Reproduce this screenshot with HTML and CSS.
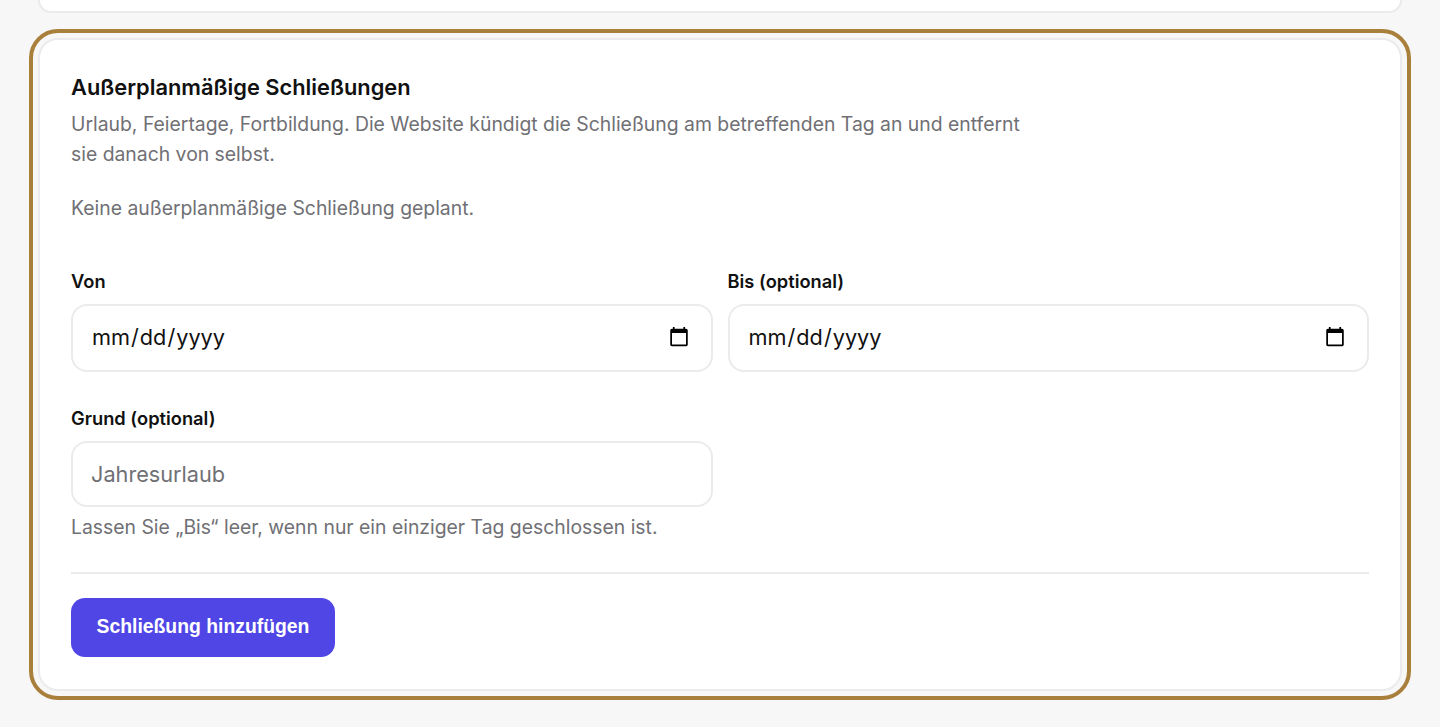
FILE: index.html
```html
<!DOCTYPE html>
<html lang="de">
<head>
    <meta charset="UTF-8">
    <meta name="viewport" content="width=device-width, initial-scale=1.0">
    <title>Außerplanmäßige Schließungen</title>
    <link rel="stylesheet" href="styles.css">
</head>
<body>

<div class="page">
    <div class="card card-prev"></div>

    <form class="card card-active">
        <h2 class="card-title">Außerplanmäßige Schließungen</h2>
        <p class="card-desc">Urlaub, Feiertage, Fortbildung. Die Website kündigt die Schließung am betreffenden Tag an und entfernt sie danach von selbst.</p>
        <p class="empty-note">Keine außerplanmäßige Schließung geplant.</p>

        <div class="form-grid">
            <div class="field">
                <label class="field-label" for="von">Von</label>
                <input class="field-input field-date" id="von" type="date">
            </div>
            <div class="field">
                <label class="field-label" for="bis">Bis (optional)</label>
                <input class="field-input field-date" id="bis" type="date">
            </div>
            <div class="field">
                <label class="field-label" for="grund">Grund (optional)</label>
                <input class="field-input" id="grund" type="text" placeholder="Jahresurlaub">
            </div>
        </div>

        <p class="hint">Lassen Sie „Bis“ leer, wenn nur ein einziger Tag geschlossen ist.</p>

        <div class="form-footer">
            <button class="submit-button" type="button">Schließung hinzufügen</button>
        </div>
    </form>
</div>

</body>
</html>
```

FILE: styles.css
```css
* {
    box-sizing: border-box;
}
html, body {
    margin: 0;
    padding: 0;
}
body {
    background-color: #f7f7f8;
    font-family: Inter, "Liberation Sans", sans-serif;
    color: #111;
}
.page {
    height: 727px;
    padding: 0 38px;
    display: flex;
    flex-direction: column;
    gap: 24.5px;
}
.card {
    background-color: #fff;
    border: 2px solid #ebebee;
    border-radius: 20px;
}
.card-prev {
    flex: none;
    height: 13px;
    border-top: none;
    border-top-left-radius: 0;
    border-top-right-radius: 0;
}
.card-active {
    flex: none;
    padding: 31px 31px 32px;
    height: 653px;
    outline: 4px solid #a97f3c;
    outline-offset: 5px;
}
.card-title {
    margin: 0 0 6.4px;
    font-size: 21.84px;
    font-weight: 600;
    line-height: 32px;
}
.card-desc {
    margin: 0;
    max-width: 960px;
    font-size: 19.36px;
    line-height: 30px;
    color: #707075;
}
.empty-note {
    margin: 24.1px 0 0;
    font-size: 19.36px;
    line-height: 30px;
    color: #707075;
}
.form-grid {
    margin-top: 44px;
    display: grid;
    grid-template-columns: 1fr 1fr;
    gap: 32px 15px;
}
.field-label {
    display: block;
    margin-bottom: 9px;
    font-size: 18.3px;
    font-weight: 600;
    line-height: 28px;
}
.field-input {
    display: block;
    width: 100%;
    padding: 18px;
    border: 2px solid #ebebee;
    border-radius: 16px;
    background-color: #fff;
    font-family: inherit;
    font-size: 21.7px;
    color: #111;
}
.field-date {
    padding: 17px 19px 19px 18px;
}
.field-input::placeholder {
    color: #707075;
}
.hint {
    margin: 5px 0 0;
    font-size: 19.36px;
    line-height: 30px;
    color: #707075;
}
.form-footer {
    margin-top: 30px;
    padding-top: 24px;
    border-top: 2px solid #ebebee;
}
.submit-button {
    height: 59px;
    padding: 0 25.5px 2px;
    border: none;
    border-radius: 14px;
    background-color: #4f46e5;
    color: #fff;
    font-family: "Liberation Sans", Arial, sans-serif;
    font-size: 19.36px;
    font-weight: 700;
}
```
